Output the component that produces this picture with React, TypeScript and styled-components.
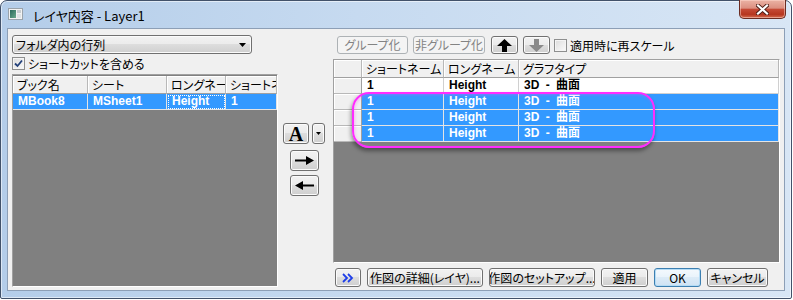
import React from "react";
import styled, { createGlobalStyle, css } from "styled-components";

const GlobalStyle = createGlobalStyle`
  html, body { margin: 0; padding: 0; background: #ffffff; }
  body {
    width: 793px;
    height: 300px;
    overflow: hidden;
    font-family: "Noto Sans CJK JP", "Liberation Sans", sans-serif;
    font-size: 12px;
    font-feature-settings: "palt";
    color: #000;
  }
`;

const jpFont = `"Noto Sans CJK JP", sans-serif`;
const cellFont = `"Liberation Sans", "Noto Sans CJK JP", sans-serif`;

const Window = styled.div`
  width: 792px;
  height: 299px;
  box-sizing: border-box;
  border: 1px solid #42526a;
  border-radius: 7px 7px 2px 2px;
  background: linear-gradient(to right, #b4cde9 0%, #c6daf0 45%, #d8e6f5 100%);
  box-shadow: inset 0 0 0 1px rgba(255, 255, 255, 0.55);
  display: flex;
  flex-direction: column;
`;

const TitleBar = styled.div`
  height: 27px;
  display: flex;
  align-items: flex-start;
  padding-left: 7px;
`;

const AppIcon = styled.svg`
  margin-top: 7px;
  flex: none;
`;

const Title = styled.div`
  margin-left: 10px;
  padding-top: 2px;
  line-height: 25px;
  font-family: ${jpFont};
  font-size: 13px;
  color: #000;
`;

const CloseButton = styled.div`
  margin-left: auto;
  margin-right: 5px;
  margin-top: -1px;
  width: 47px;
  height: 19px;
  box-sizing: border-box;
  border: 1px solid #6b2c22;
  border-top: none;
  border-radius: 0 0 5px 5px;
  background: linear-gradient(#ebb3a5 0%, #dc8f80 45%, #c54a36 52%, #b6361f 80%, #d46c4f 100%);
  box-shadow: inset 0 0 0 1px rgba(255, 220, 210, 0.5);
  display: flex;
  align-items: center;
  justify-content: center;
`;

const Client = styled.div`
  margin: 0 6px;
  height: 263px;
  box-sizing: border-box;
  border: 1px solid #8d9fb6;
  background: #f0f0f0;
  display: flex;
  padding: 6px 4px 0 4px;
`;

const LeftPane = styled.div`
  width: 266px;
  display: flex;
  flex-direction: column;
`;

const MiddlePane = styled.div`
  width: 55px;
  display: flex;
  flex-direction: column;
  align-items: flex-start;
  padding: 88px 0 0 5px;
  box-sizing: border-box;
`;

const RightPane = styled.div`
  width: 447px;
  margin-top: 1px;
  display: flex;
  flex-direction: column;
`;

const buttonFace = css`
  box-sizing: border-box;
  border: 1px solid #707070;
  border-radius: 3px;
  background: linear-gradient(#f2f2f2 0%, #ebebeb 49%, #dddddd 50%, #cfcfcf 100%);
  box-shadow: inset 0 0 0 1px #fbfbfb;
`;

const Select = styled.div`
  ${buttonFace};
  width: 240px;
  height: 19px;
  display: flex;
  align-items: center;
  justify-content: space-between;
  padding: 0 5px 0 3px;
  font-family: ${jpFont};
  line-height: 17px;
`;

const CheckRow = styled.label<{ $m?: string }>`
  display: flex;
  align-items: center;
  gap: 3px;
  height: 13px;
  font-family: ${jpFont};
  line-height: 13px;
  margin: ${(p) => p.$m || "0"};
`;

const Box = styled.span`
  width: 13px;
  height: 13px;
  box-sizing: border-box;
  border: 1px solid #8e8f8f;
  background: linear-gradient(135deg, #dcdcdc, #fbfbfb);
  box-shadow: inset 0 0 0 1px #f4f4f4;
  display: flex;
  align-items: center;
  justify-content: center;
  flex: none;
`;

const Grid = styled.div<{ $cols: string; $h: number; $padTop?: number }>`
  position: relative;
  height: ${(p) => p.$h}px;
  box-sizing: border-box;
  border: 1px solid;
  border-color: #a0a0a0 #ffffff #ffffff #a0a0a0;
  background: #808080;
  padding-top: ${(p) => p.$padTop || 0}px;
  display: grid;
  grid-template-columns: ${(p) => p.$cols};
  grid-template-rows: 18px;
  grid-auto-rows: 16px;
  align-content: start;
`;

type CellKind = "head" | "rowhead" | "plain" | "sel";

const Cell = styled.div<{ $kind: CellKind; $focus?: boolean }>`
  box-sizing: border-box;
  overflow: hidden;
  white-space: nowrap;
  padding-left: 4px;
  border-right: 1px solid #c8c8c8;
  border-bottom: 1px solid #c8c8c8;
  ${(p) =>
    p.$kind === "head" &&
    css`
      background: #f0f0f0;
      font-family: ${jpFont};
      line-height: 17px;
      border-right-color: #b8b8b8;
      border-bottom-color: #a0a0a0;
      box-shadow: inset 1px 1px 0 #ffffff;
    `}
  ${(p) =>
    p.$kind === "rowhead" &&
    css`
      background: #f0f0f0;
      border-right-color: #a0a0a0;
      border-bottom-color: #b8b8b8;
      box-shadow: inset 1px 1px 0 #ffffff;
    `}
  ${(p) =>
    (p.$kind === "plain" || p.$kind === "sel") &&
    css`
      font-family: ${cellFont};
      font-weight: bold;
      line-height: 15px;
      padding-left: 5px;
      word-spacing: 3px;
    `}
  ${(p) =>
    p.$kind === "plain" &&
    css`
      background: #ffffff;
      border-right-color: #d0d0d0;
      border-bottom-color: #d0d0d0;
    `}
  ${(p) =>
    p.$kind === "sel" &&
    css`
      background: #3399ff;
      color: #ffffff;
      border-right-color: #e4e4e4;
      border-bottom-color: #e4e4e4;
    `}
  ${(p) =>
    p.$focus &&
    css`
      outline: 1px dotted #ffffff;
      outline-offset: -2px;
    `}
`;

const Highlight = styled.div`
  position: absolute;
  left: 18px;
  top: 32px;
  width: 303px;
  height: 56px;
  box-sizing: border-box;
  border: 2px solid #ff2cff;
  border-radius: 17px;
  box-shadow: -1px 3px 4px rgba(0, 0, 0, 0.4), inset 1px 1px 3px rgba(255, 80, 255, 0.35);
  pointer-events: none;
`;

const Toolbar = styled.div`
  height: 18px;
  display: flex;
  align-items: center;
  padding-left: 4px;
`;

const Button = styled.div<{ $w: number; $h?: number; $off?: boolean; $default?: boolean; $gap?: number }>`
  ${buttonFace};
  width: ${(p) => p.$w}px;
  height: ${(p) => p.$h || 19}px;
  margin-left: ${(p) => p.$gap || 0}px;
  display: flex;
  align-items: center;
  justify-content: center;
  font-family: ${jpFont};
  font-size: 12px;
  line-height: 14px;
  white-space: nowrap;
  overflow: hidden;
  flex: none;
  ${(p) =>
    p.$off &&
    css`
      border-color: #adb2b5;
      background: #f4f4f4;
      box-shadow: none;
      color: #838383;
    `}
  ${(p) =>
    p.$default &&
    css`
      border-color: #3c7fb1;
      background: linear-gradient(#f4f9fd 0%, #e9f3fb 49%, #dcebf7 50%, #cfe3f4 100%);
      box-shadow: inset 0 0 0 1px #b5dcf5;
    `}
`;

const FontA = styled.span`
  font-family: "Liberation Serif", serif;
  font-weight: bold;
  font-size: 20px;
  line-height: 20px;
  margin-top: 1px;
`;

const ARow = styled.div`
  display: flex;
  gap: 3px;
`;

const ArrowStack = styled.div`
  display: flex;
  flex-direction: column;
  gap: 4px;
  margin: 6px 0 0 7px;
`;

const BottomBar = styled.div`
  margin-top: 5px;
  height: 19px;
  display: flex;
  align-items: center;
  padding-left: 2px;
`;

const Check = () => (
  <svg width="9" height="9" viewBox="0 0 9 9">
    <path d="M1 4.5 L3.5 7 L8 1.5" fill="none" stroke="#23417a" strokeWidth="1.8" />
  </svg>
);

const Triangle = ({ w = 7 }: { w?: number }) => (
  <svg width={w} height={Math.ceil(w / 2)} viewBox={`0 0 ${w} ${Math.ceil(w / 2)}`}>
    <path d={`M0 0 H${w} L${w / 2} ${Math.ceil(w / 2)} Z`} fill="#000" />
  </svg>
);

const VArrow = ({ up, color }: { up?: boolean; color: string }) => (
  <svg width="15" height="13" viewBox="0 0 15 13" style={{ transform: up ? "none" : "rotate(180deg)" }}>
    <path d="M7.5 0 L15 7 L10 7 L10 13 L5 13 L5 7 L0 7 Z" fill={color} />
  </svg>
);

const HArrow = ({ left }: { left?: boolean }) => (
  <svg width="19" height="9" viewBox="0 0 19 9" style={{ transform: left ? "scaleX(-1)" : "none" }}>
    <path d="M0 3.5 H11 V0 L19 4.5 L11 9 V5.5 H0 Z" fill="#000" />
  </svg>
);

const leftHead = ["ブック名", "シート", "ロングネーム", "ショートネーム"];
const leftRow = ["MBook8", "MSheet1", "Height", "1"];
const rightHead = ["", "ショートネーム", "ロングネーム", "グラフタイプ"];
const rightRows: CellKind[] = ["plain", "sel", "sel", "sel"];

export default function App() {
  return (
    <>
      <GlobalStyle />
      <Window>
        <TitleBar>
          <AppIcon width="15" height="12" viewBox="0 0 15 12">
            <defs>
              <linearGradient id="ig" x1="0" y1="0" x2="1" y2="1">
                <stop offset="0" stopColor="#2a6a5c" />
                <stop offset="1" stopColor="#6aa98c" />
              </linearGradient>
            </defs>
            <rect x="0.5" y="0.5" width="14" height="11" fill="#f2f2f2" stroke="#9aa3ab" />
            <rect x="2" y="2" width="6" height="8" fill="url(#ig)" />
            <rect x="9" y="2" width="4" height="3" fill="#c7ccd0" />
            <rect x="9" y="6" width="4" height="4" fill="#dfe3e6" />
          </AppIcon>
          <Title>レイヤ内容 - Layer1</Title>
          <CloseButton>
            <svg width="13" height="11" viewBox="0 0 13 11">
              <path d="M2 1.5 L11 9.5 M11 1.5 L2 9.5" stroke="#4a1a12" strokeWidth="4" strokeLinecap="square" />
              <path d="M2 1.5 L11 9.5 M11 1.5 L2 9.5" stroke="#ffffff" strokeWidth="2.2" strokeLinecap="square" />
            </svg>
          </CloseButton>
        </TitleBar>
        <Client>
          <LeftPane>
            <Select>
              <span>フォルダ内の行列</span>
              <Triangle />
            </Select>
            <CheckRow $m="3px 0 0 0">
              <Box>
                <Check />
              </Box>
              <span>ショートカットを含める</span>
            </CheckRow>
            <Grid $cols="75px 79px 59px 51px" $h={213} $padTop={1} style={{ marginTop: 4 }}>
              {leftHead.map((t) => (
                <Cell key={t} $kind="head">
                  {t}
                </Cell>
              ))}
              {leftRow.map((t, i) => (
                <Cell key={t} $kind="sel" $focus={i === 2}>
                  {t}
                </Cell>
              ))}
            </Grid>
          </LeftPane>

          <MiddlePane>
            <ARow>
              <Button $w={26} $h={21}>
                <FontA>A</FontA>
              </Button>
              <Button $w={13} $h={21}>
                <Triangle w={5} />
              </Button>
            </ARow>
            <ArrowStack>
              <Button $w={29} $h={21}>
                <HArrow />
              </Button>
              <Button $w={29} $h={21}>
                <HArrow left />
              </Button>
            </ArrowStack>
          </MiddlePane>

          <RightPane>
            <Toolbar>
              <Button $w={71} $h={18} $off>
                グループ化
              </Button>
              <Button $w={72} $h={18} $off $gap={5}>
                非グループ化
              </Button>
              <Button $w={27} $h={18} $gap={6}>
                <VArrow up color="#000" />
              </Button>
              <Button $w={27} $h={18} $gap={5}>
                <VArrow color="#8a8a8a" />
              </Button>
              <CheckRow $m="0 0 0 4px">
                <Box />
                <span>適用時に再スケール</span>
              </CheckRow>
            </Toolbar>
            <Grid $cols="28px 82px 75px 260px" $h={204} style={{ marginTop: 5 }}>
              {rightHead.map((t, i) => (
                <Cell key={i} $kind="head">
                  {t}
                </Cell>
              ))}
              {rightRows.map((k, r) => (
                <React.Fragment key={r}>
                  <Cell $kind="rowhead" />
                  <Cell $kind={k}>1</Cell>
                  <Cell $kind={k}>Height</Cell>
                  <Cell $kind={k}>3D - 曲面</Cell>
                </React.Fragment>
              ))}
              <Highlight />
            </Grid>
            <BottomBar>
              <Button $w={26}>
                <svg width="12" height="10" viewBox="0 0 12 10">
                  <path d="M1 1 L5 5 L1 9 M6 1 L10 5 L6 9" fill="none" stroke="#1f3fe8" strokeWidth="1.8" />
                </svg>
              </Button>
              <Button $w={116} $gap={6}>
                作図の詳細(レイヤ)...
              </Button>
              <Button $w={106} $gap={6}>
                作図のセットアップ...
              </Button>
              <Button $w={47} $gap={6}>
                適用
              </Button>
              <Button $w={47} $gap={6} $default>
                OK
              </Button>
              <Button $w={61} $gap={6}>
                キャンセル
              </Button>
            </BottomBar>
          </RightPane>
        </Client>
      </Window>
    </>
  );
}
